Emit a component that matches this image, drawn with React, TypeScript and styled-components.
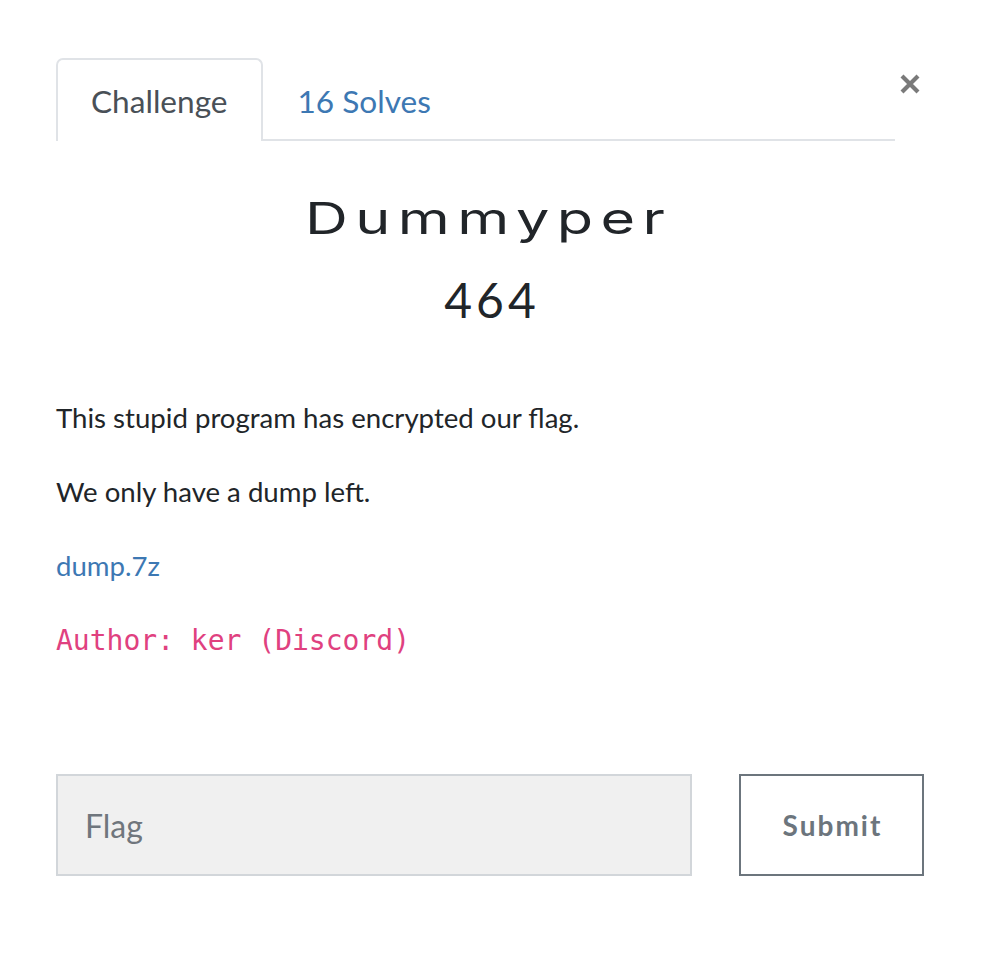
import React from "react";
import styled, { createGlobalStyle } from "styled-components";

const Global = createGlobalStyle`
  html, body { margin: 0; padding: 0; background: #ffffff; }
  body { font-family: Lato, "Open Sans", sans-serif; color: #212529; }
  * { box-sizing: border-box; }
`;

const Modal = styled.div`
  width: 982px;
  min-height: 956px;
  padding: 58px 58px 0 56px;
`;

const Header = styled.div`
  display: flex;
  align-items: flex-start;
`;

const Tabs = styled.nav`
  display: flex;
  align-items: flex-end;
  width: 840px;
  border-bottom: 2px solid #e0e3e7;
`;

const Tab = styled.a<{ $active?: boolean }>`
  display: flex;
  align-items: center;
  height: 83px;
  margin-bottom: -2px;
  padding: 0 33px;
  font-size: 31.6px;
  text-decoration: none;
  cursor: pointer;
  border: 2px solid ${(p) => (p.$active ? "#e0e3e7" : "transparent")};
  border-bottom: none;
  border-radius: 7px 7px 0 0;
  background: ${(p) => (p.$active ? "#fff" : "transparent")};
  color: ${(p) => (p.$active ? "#495057" : "#3d78b3")};
`;

const Close = styled.button`
  width: 28px;
  height: 52px;
  border: none;
  background: none;
  padding: 0;
  margin-left: 1px;
  display: flex;
  align-items: center;
  justify-content: center;
  cursor: pointer;
`;

const Body = styled.div`
  width: 868px;
`;

const Title = styled.h2`
  margin: 49px 0 0 0;
  text-align: center;
  font-family: Inter, "Open Sans", sans-serif;
  font-weight: 400;
  font-size: 44px;
  line-height: 56px;
  color: #212529;
`;

const TitleText = styled.span`
  display: inline-block;
  padding-right: 2px;
  letter-spacing: 5.5px;
  transform: scaleX(1.35);
  transform-origin: center;
`;

const Value = styled.h3`
  margin: 26px 0 0 0;
  padding-left: 4px;
  text-align: center;
  font-family: Lato, sans-serif;
  font-weight: 400;
  font-size: 48px;
  line-height: 56px;
  letter-spacing: 4px;
  color: #212529;
`;

const Description = styled.div`
  margin-top: 70px;
`;

const Para = styled.p`
  margin: 0 0 34px 0;
  font-size: 27.6px;
  line-height: 40px;
  &:last-child { margin-bottom: 0; }
`;

const Link = styled.a`
  color: #3d78b3;
  text-decoration: none;
`;

const Code = styled.code`
  font-family: "DejaVu Sans Mono", "Liberation Mono", monospace;
  font-size: 28px;
  color: #e0417f;
`;

const Form = styled.form`
  display: flex;
  gap: 47px;
  margin-top: 113px;
`;

const Input = styled.input`
  width: 636px;
  height: 102px;
  background: #f0f0f0;
  border: 2px solid #d2d6da;
  padding: 0 27px;
  font-family: Lato, sans-serif;
  font-size: 32px;
  color: #495057;
  outline: none;
  &::placeholder { color: #6f767d; }
`;

const Submit = styled.button`
  width: 185px;
  height: 102px;
  padding: 0 0 0 2px;
  background: #fff;
  border: 2px solid #6c757d;
  color: #6c757d;
  font-family: Lato, sans-serif;
  font-weight: 700;
  font-size: 28px;
  letter-spacing: 2px;
  cursor: pointer;
`;

export default function App() {
  return (
    <>
      <Global />
      <Modal>
        <Header>
          <Tabs>
            <Tab $active>Challenge</Tab>
            <Tab>16 Solves</Tab>
          </Tabs>
          <Close aria-label="Close">
            <svg width="22" height="22" viewBox="0 0 22 22">
              <path d="M3 3 L19 19 M19 3 L3 19" stroke="#7a7a7a" strokeWidth="4.2" strokeLinecap="butt" />
            </svg>
          </Close>
        </Header>
        <Body>
          <Title>
            <TitleText>Dummyper</TitleText>
          </Title>
          <Value>464</Value>
          <Description>
            <Para>This stupid program has encrypted our flag.</Para>
            <Para>We only have a dump left.</Para>
            <Para>
              <Link href="#">dump.7z</Link>
            </Para>
            <Para>
              <Code>Author: ker (Discord)</Code>
            </Para>
          </Description>
          <Form onSubmit={(e) => e.preventDefault()}>
            <Input placeholder="Flag" />
            <Submit type="submit">Submit</Submit>
          </Form>
        </Body>
      </Modal>
    </>
  );
}
